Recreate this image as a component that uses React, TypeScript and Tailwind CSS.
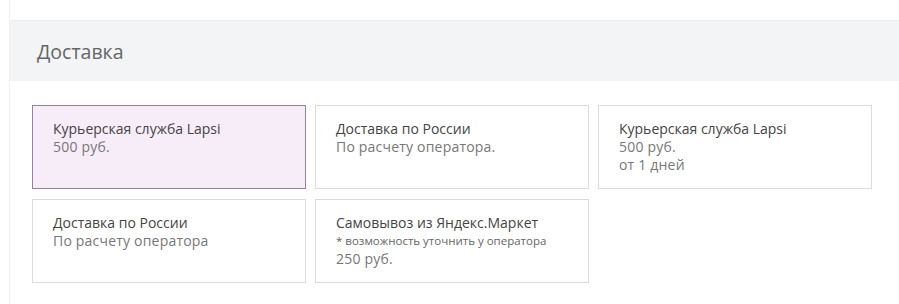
const options = [
  { title: "Курьерская служба Lapsi", lines: ["500 руб."], active: true },
  { title: "Доставка по России", lines: ["По расчету оператора."] },
  { title: "Курьерская служба Lapsi", lines: ["500 руб.", "от 1 дней"] },
  { title: "Доставка по России", lines: ["По расчету оператора"] },
  {
    title: "Самовывоз из Яндекс.Маркет",
    note: "* возможность уточнить у оператора",
    lines: ["250 руб."],
  },
];

export default function App() {
  return (
    <div className="w-[899px] h-[304px] bg-white font-['Open_Sans',sans-serif] overflow-hidden">
      <div className="ml-[9px] h-full border-l border-[#f0f0f0] pt-[20px]">
        <div className="h-[61px] bg-[#f3f4f5] border-t border-[#eceded] flex items-center pl-[27px] pt-[2px]">
          <h2 className="text-[19.5px] text-[#666] leading-none">Доставка</h2>
        </div>
        <div className="grid grid-cols-[274px_274px_274px] gap-x-[9px] gap-y-[10px] pt-[24px] pl-[22px]">
          {options.map((o, i) => (
            <div
              key={i}
              className={`h-[84px] border px-[20px] pt-[14px] ${
                o.active ? "bg-[#f7edf9] border-[#9a7fa0]" : "bg-white border-[#dcdcdc]"
              }`}
            >
              <div className="text-[14px] leading-[18px] text-[#444]">{o.title}</div>
              {o.note && (
                <div className="text-[11.5px] leading-[18px] text-[#666]">{o.note}</div>
              )}
              {o.lines.map((l, j) => (
                <div key={j} className="text-[14px] leading-[18px] text-[#777] tracking-[0.2px]">
                  {l}
                </div>
              ))}
            </div>
          ))}
        </div>
      </div>
    </div>
  );
}
